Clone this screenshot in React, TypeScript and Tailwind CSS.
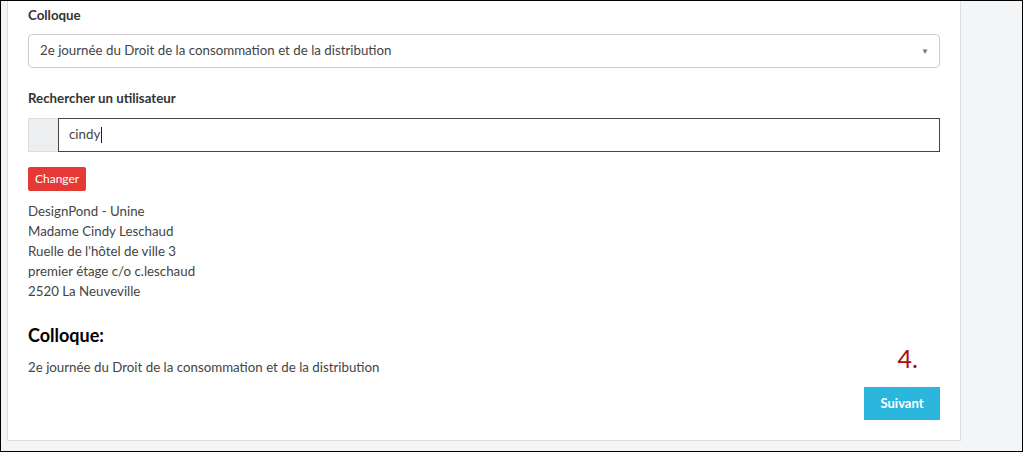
import React from "react";

const App = () => {
  const address = [
    "DesignPond - Unine",
    "Madame Cindy Leschaud",
    "Ruelle de l'hôtel de ville 3",
    "premier étage c/o c.leschaud",
    "2520 La Neuveville",
  ];

  return (
    <div className="w-[1023px] h-[452px] overflow-hidden border border-black bg-[#f4f5f7] font-['Lato',sans-serif] text-[#444]">
      <div className="flex h-full">
        <div className="ml-[6px] w-[954px] h-[440px] bg-white border border-t-0 border-[#dcdde0] px-[20px] flex flex-col">
          <label className="block mt-[5px] text-[13.3px] font-bold text-[#333] leading-[18px]">Colloque</label>
          <div className="mt-[10px] h-[34px] rounded border border-[#ccc] flex items-center justify-between pl-[11px] pr-[10px] text-[13.3px] text-[#444]">
            <span>2e journée du Droit de la consommation et de la distribution</span>
            <span className="text-[8px] text-[#777]">▼</span>
          </div>

          <label className="block mt-[21px] text-[13.3px] font-bold text-[#333] leading-[18px]">Rechercher un utilisateur</label>
          <div className="mt-[11px] flex h-[34px]">
            <div className="w-[30px] bg-[#eceeef] border border-r-0 border-[#ddd]" />
            <div className="flex-1 border border-[#444] flex items-center pl-[10px] text-[13.3px] text-[#444]">
              cindy<span className="inline-block w-px h-[16px] bg-[#222] ml-px" />
            </div>
          </div>

          <button className="mt-[15px] self-start h-[24px] px-[7px] bg-[#e53935] text-white text-[12px] rounded-[2px] leading-[24px]">
            Changer
          </button>

          <div className="mt-[10px] text-[13.3px] leading-[20px] text-[#444]">
            {address.map((line) => (
              <div key={line}>{line}</div>
            ))}
          </div>

          <h3 className="mt-[23px] text-[18px] font-bold text-black leading-[22px]">Colloque:</h3>
          <div className="flex justify-between">
            <p className="mt-[12px] text-[13.3px] text-[#444] leading-[18px]">
              2e journée du Droit de la consommation et de la distribution
            </p>
            <div className="flex flex-col items-end">
              <span className="text-[25px] leading-[28px] text-[#a50e0e] mr-[22px] -mt-[2px]">4.</span>
              <button className="mt-[15px] w-[76px] h-[33px] bg-[#2bb6de] text-white text-[13px] font-bold">
                Suivant
              </button>
            </div>
          </div>
        </div>
      </div>
    </div>
  );
};

export default App;
